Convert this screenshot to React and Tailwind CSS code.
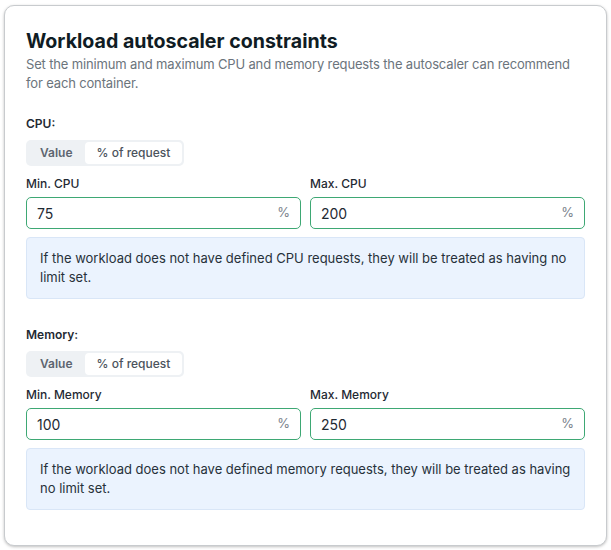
const sections = [
  {
    label: 'CPU:',
    min: { label: 'Min. CPU', value: '75' },
    max: { label: 'Max. CPU', value: '200' },
    note: 'If the workload does not have defined CPU requests, they will be treated as having no limit set.',
  },
  {
    label: 'Memory:',
    min: { label: 'Min. Memory', value: '100' },
    max: { label: 'Max. Memory', value: '250' },
    note: 'If the workload does not have defined memory requests, they will be treated as having no limit set.',
  },
]

function Toggle() {
  return (
    <div className="flex w-fit rounded-[5px] bg-[#eef1f4] p-[2px] text-[12px] leading-[22px]">
      <button className="px-[12px] font-semibold text-[#5d6570]">Value</button>
      <button className="rounded-[4px] bg-white px-[12px] font-medium text-[#4b535c]">% of request</button>
    </div>
  )
}

function PercentInput({ label, value }) {
  return (
    <div className="flex flex-1 flex-col">
      <div className="mb-[5px] text-[12px] font-medium leading-[16px] text-[#1f2a33]">{label}</div>
      <div className="flex h-[32px] items-center rounded-[5px] border border-[#3ea874] px-[10px]">
        <span className="flex-1 text-[14px] text-[#1f2a33]">{value}</span>
        <span className="text-[13px] text-[#7a838c]">%</span>
      </div>
    </div>
  )
}

function Section({ label, min, max, note }) {
  return (
    <div className="flex flex-col">
      <div className="mb-[8px] text-[12px] font-semibold leading-[16px] text-[#1f2a33]">{label}</div>
      <Toggle />
      <div className="mt-[10px] flex gap-[9px]">
        <PercentInput {...min} />
        <PercentInput {...max} />
      </div>
      <div className="mt-[8px] rounded-[4px] border border-[#d9e6f7] bg-[#ebf3fe] px-[13px] py-[11px] text-[13px] leading-[19px] text-[#27313a]">
        {note}
      </div>
    </div>
  )
}

export default function App() {
  return (
    <div className="min-h-[550px] bg-white p-[4px] pt-[5px]" style={{ fontFamily: 'Inter, "Noto Sans", sans-serif' }}>
      <div className="rounded-[10px] border border-[#c8cbce] bg-white px-[21px] pb-[35px] pt-[22px] shadow-[0_1px_3px_rgba(0,0,0,0.25)]">
        <h1 className="text-[19.6px] font-bold leading-[26px] text-[#101c24]">Workload autoscaler constraints</h1>
        <p className="mt-[1px] text-[13px] leading-[19px] tracking-[-0.15px] text-[#6b747c]">
          Set the minimum and maximum CPU and memory requests the autoscaler can recommend for each container.
        </p>
        <div className="mt-[23px] flex flex-col gap-[28px]">
          {sections.map((s) => (
            <Section key={s.label} {...s} />
          ))}
        </div>
      </div>
    </div>
  )
}
